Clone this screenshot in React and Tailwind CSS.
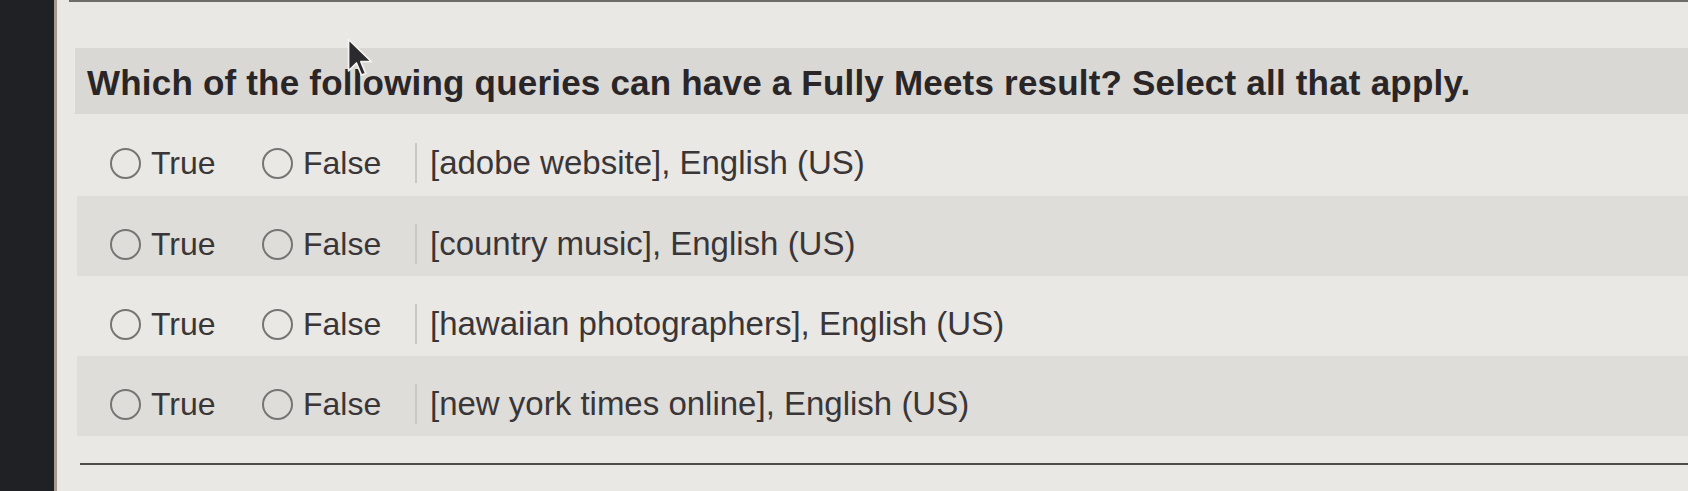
import React from 'react';

const queries = [
    { text: '[adobe website], English (US)', shaded: false },
    { text: '[country music], English (US)', shaded: true },
    { text: '[hawaiian photographers], English (US)', shaded: false },
    { text: '[new york times online], English (US)', shaded: true },
];

function Radio({ label }) {
    return (
        <label className="flex items-center">
            <span className="h-[31px] w-[31px] rounded-full border-2 border-[#777573] bg-transparent" />
            <span className="ml-[10px]">{label}</span>
        </label>
    );
}

export default function App() {
    return (
        <div
            className="flex h-[491px] w-[1688px] overflow-hidden bg-[#e9e8e4]"
            style={{ fontFamily: '"Liberation Sans", Arial, sans-serif' }}
        >
            {/* monitor bezel */}
            <div className="w-[54px] shrink-0 bg-[#1f2125]" />
            <div className="w-[3px] shrink-0 bg-[#a59a92]" />

            <div className="relative flex-1">
                <div className="ml-[12px] h-[2px] bg-[#6e6c68]" />

                {/* Question header */}
                <div className="ml-[18px] mt-[46px] flex h-[66px] items-center bg-[#d9d8d4] pl-[12px] pt-[4px]">
                    <h2 className="text-[35px] font-bold tracking-[0.2px] text-[#2a2628]">
                        Which of the following queries can have a Fully Meets result? Select all that apply.
                    </h2>
                </div>

                {/* Answer rows */}
                <div className="ml-[20px]">
                    {queries.map((q, i) => (
                        <div
                            key={i}
                            className={`flex items-center pl-[33px] pt-[16px] text-[32px] text-[#3a3638] ${
                                q.shaded ? 'bg-[#dedddA]' : ''
                            } ${i === 0 ? 'h-[82px]' : 'h-[80px]'}`}
                        >
                            <div className="w-[152px]">
                                <Radio label="True" />
                            </div>
                            <div className="w-[153px]">
                                <Radio label="False" />
                            </div>
                            <div className="h-[40px] w-[2px] bg-[#c9c8c4]" />
                            <span className="pl-[13px] text-[33px]">{q.text}</span>
                        </div>
                    ))}
                </div>

                <div className="ml-[23px] mt-[27px] h-[2px] bg-[#4f4d4b]" />

                {/* mouse pointer */}
                <svg
                    className="absolute left-[290px] top-[38px]"
                    width="26"
                    height="40"
                    viewBox="0 0 18 28"
                >
                    <path
                        d="M1 1 L1 23 L6.5 17.5 L10 26 L13 24.8 L9.6 16.5 L17 16.5 Z"
                        fill="#2b2a2e"
                        stroke="#f4f3ef"
                        strokeWidth="1.2"
                        strokeLinejoin="round"
                    />
                </svg>
            </div>
        </div>
    );
}
